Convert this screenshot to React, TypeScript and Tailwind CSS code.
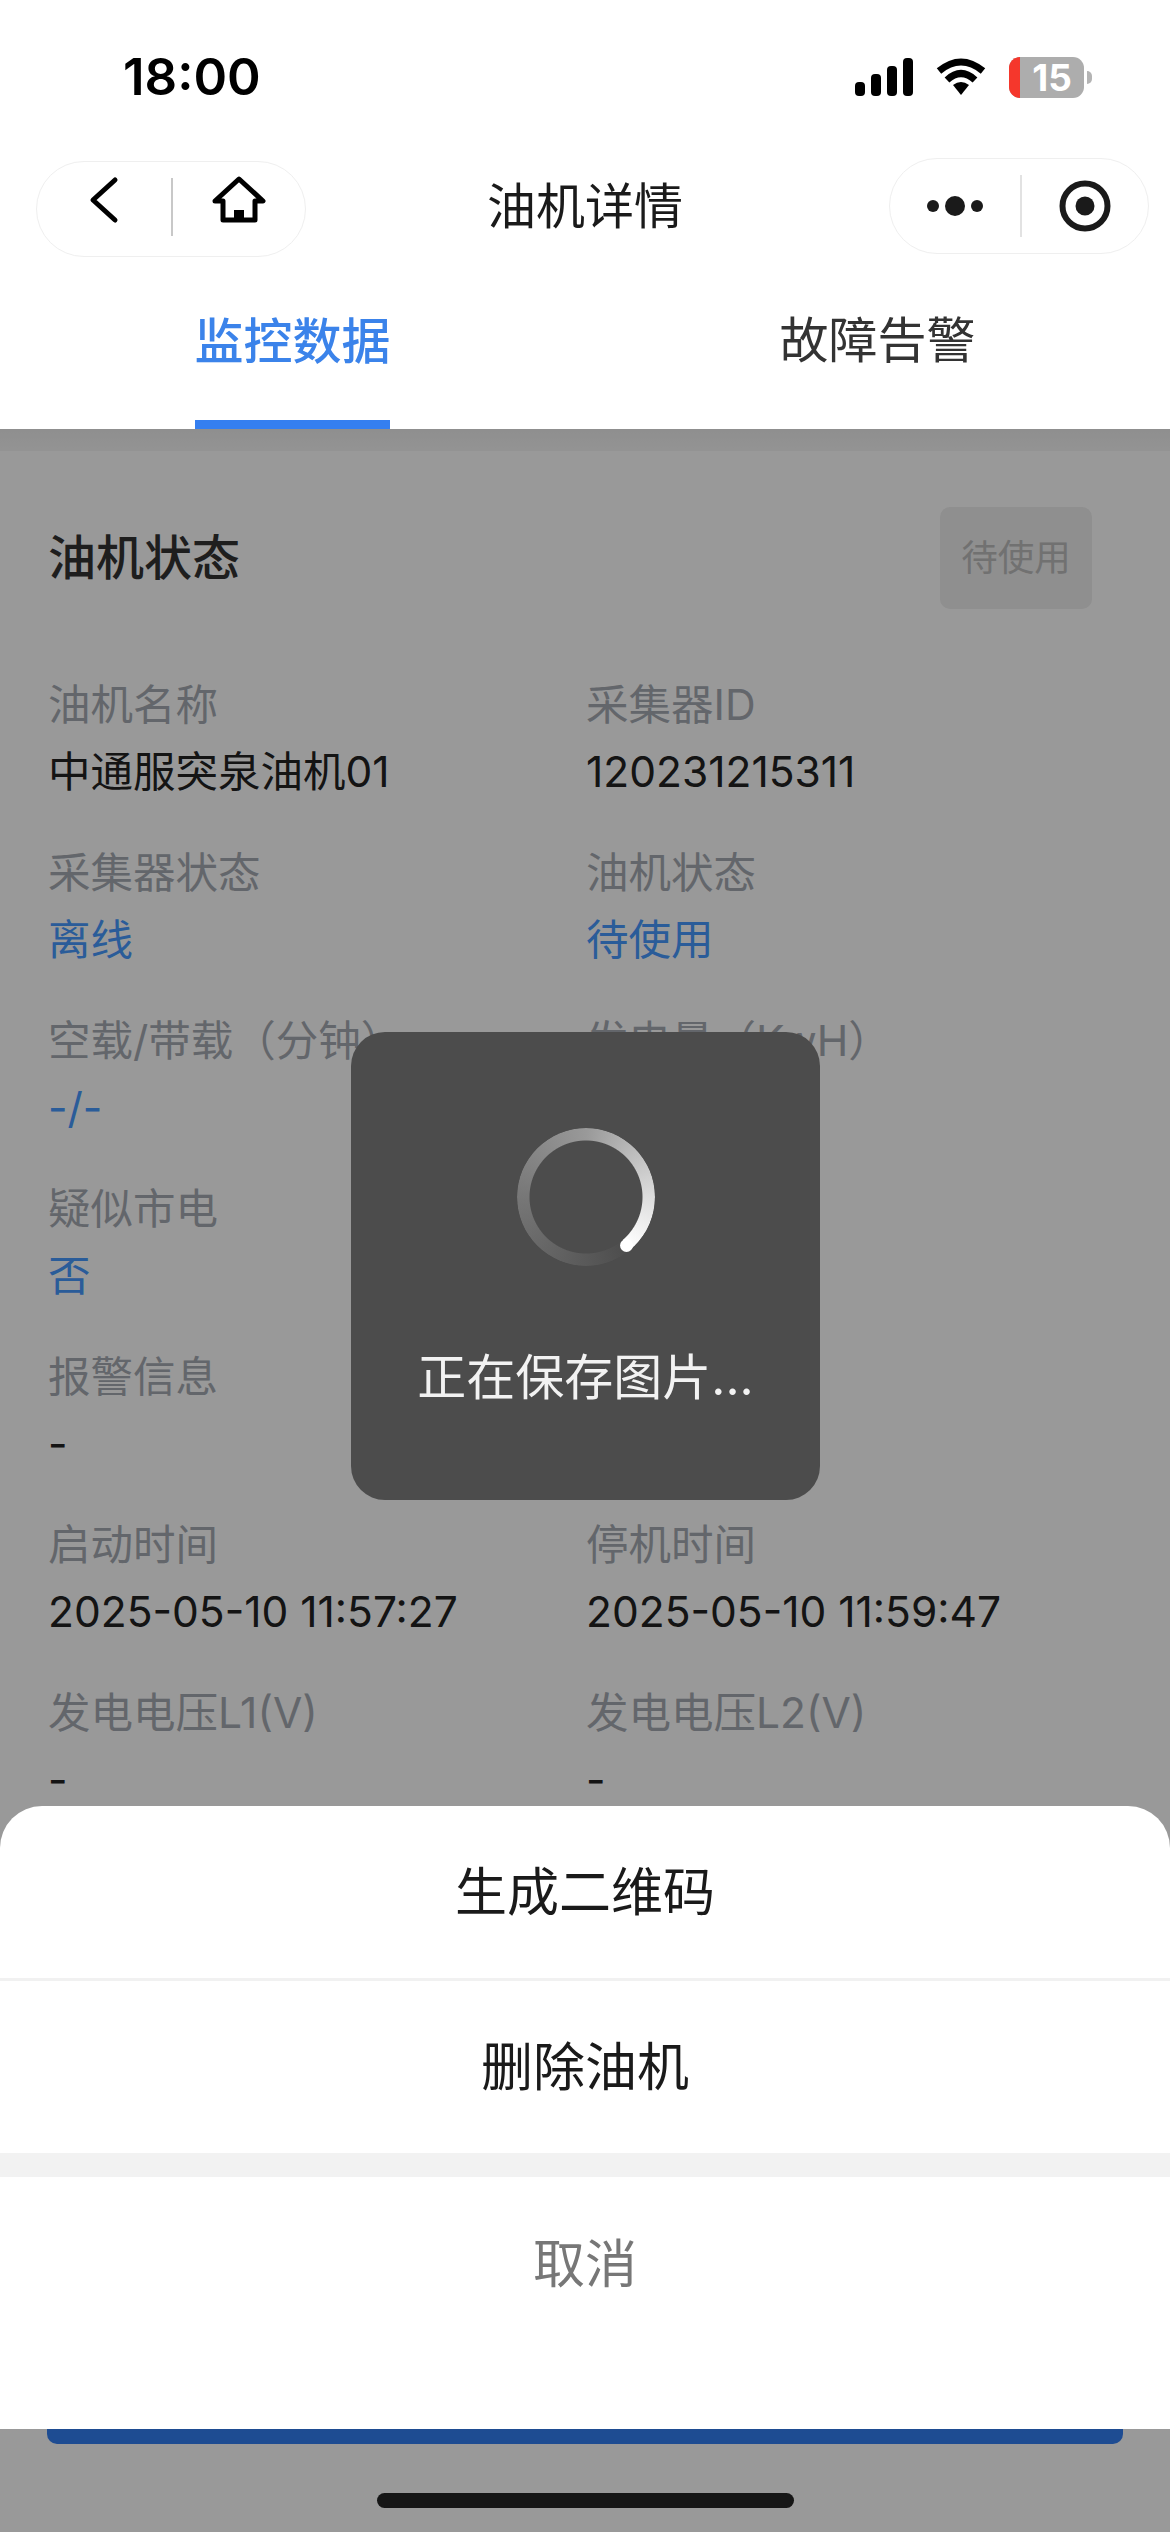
const rows = [
  [
    { label: '油机名称', value: '中通服突泉油机01' },
    { label: '采集器ID', value: '120231215311' },
  ],
  [
    { label: '采集器状态', value: '离线', blue: true },
    { label: '油机状态', value: '待使用', blue: true },
  ],
  [
    { label: '空载/带载（分钟）', value: '-/-', blue: true },
    { label: '发电量（KwH）', value: '-', blue: true },
  ],
  [
    { label: '疑似市电', value: '否', blue: true },
    { label: '', value: '' },
  ],
  [
    { label: '报警信息', value: '-' },
    { label: '', value: '' },
  ],
  [
    { label: '启动时间', value: '2025-05-10 11:57:27' },
    { label: '停机时间', value: '2025-05-10 11:59:47' },
  ],
  [
    { label: '发电电压L1(V)', value: '-' },
    { label: '发电电压L2(V)', value: '-' },
  ],
];

function StatusBar() {
  return (
    <div className="h-[154px] flex items-center justify-between pl-[123px] pr-[78px]">
      <span className="text-[51px] font-semibold text-black">18:00</span>
      <div className="flex items-center">
        <svg width="59" height="38" viewBox="0 0 59 38" fill="#000">
          <rect x="0" y="24" width="10" height="14" rx="4" />
          <rect x="16" y="16" width="10" height="22" rx="4" />
          <rect x="32" y="8" width="10" height="30" rx="4" />
          <rect x="48" y="0" width="10" height="38" rx="4" />
        </svg>
        <svg className="ml-[22px]" width="50" height="38" viewBox="0 0 50 38" fill="none" stroke="#000">
          <path d="M3 13 Q25 -5 47 13" strokeWidth="7" />
          <path d="M11 22 Q25 9 39 22" strokeWidth="7" />
          <path d="M17 27 Q25 21 33 27 L25 37 Z" fill="#000" stroke="none" />
        </svg>
        <div className="ml-[23px] w-[75px] h-[41px] rounded-[11px] bg-[#adadad] flex items-center">
          <div className="w-[11px] h-full rounded-l-[11px] bg-[#f5372c]" />
          <span className="flex-1 text-center text-[37px] leading-none font-bold text-white">15</span>
        </div>
        <div className="ml-[3px] w-[5px] h-[13px] rounded-r-full bg-[#b4b4b4]" />
      </div>
    </div>
  );
}

function NavBar() {
  return (
    <div className="relative h-[104px] flex items-center justify-between pl-[36px] pr-[21px]">
      <div className="mt-[6px] w-[270px] h-[96px] rounded-full border border-[#efefef] flex items-center">
        <div className="w-[134px] flex justify-center pb-[18px]">
          <svg width="30" height="48" viewBox="0 0 30 48" fill="none" stroke="#000" strokeWidth="5" strokeLinecap="round" strokeLinejoin="round">
            <path d="M26 4 L4 24 L26 44" />
          </svg>
        </div>
        <div className="w-[2px] h-[58px] mb-[4px] bg-[#c8c8c8]" />
        <div className="flex-1 flex justify-center pb-[18px]">
          <svg width="54" height="48" viewBox="0 0 54 48" fill="none" stroke="#000" strokeWidth="5" strokeLinejoin="round">
            <path d="M27 3 L51 25 H43 V44 H11 V25 H3 Z" />
            <rect x="22" y="34" width="10" height="10" fill="#000" stroke="none" />
          </svg>
        </div>
      </div>
      <span className="absolute left-0 right-0 top-[28px] text-center text-[49px] leading-none text-[#1a1a1a]">油机详情</span>
      <div className="relative w-[260px] h-[96px] rounded-full border border-[#efefef] flex items-center">
        <div className="w-[130px] flex justify-center">
          <svg width="56" height="22" viewBox="0 0 56 22" fill="#1a1a1a">
            <circle cx="6" cy="11" r="6" />
            <circle cx="28" cy="11" r="10" />
            <circle cx="50" cy="11" r="6" />
          </svg>
        </div>
        <div className="w-[2px] h-[62px] bg-[#e2e2e2]" />
        <div className="flex-1 flex justify-center">
          <svg width="52" height="52" viewBox="0 0 52 52" fill="none">
            <circle cx="26" cy="26" r="22.500" stroke="#1a1a1a" strokeWidth="6" />
            <circle cx="26" cy="26" r="9.500" fill="#1a1a1a" />
          </svg>
        </div>
      </div>
    </div>
  );
}

function Tabs() {
  return (
    <div className="h-[171px] flex bg-white">
      <div className="w-1/2 flex justify-center">
        <div className="w-[195px] h-full flex flex-col items-center justify-end">
          <span className="text-[49px] leading-none text-[#3b83ea] font-medium whitespace-nowrap mb-[54px]">监控数据</span>
          <div className="w-full h-[9px] bg-[#357ff0]" />
        </div>
      </div>
      <div className="w-1/2 flex justify-center">
        <span className="text-[49px] leading-none text-[#333] mt-[58px]">故障告警</span>
      </div>
    </div>
  );
}

function Card() {
  return (
    <div>
      {/* soft band under the tabs */}
      <div className="h-[22px] bg-gradient-to-b from-[#eeeeee] to-[#f6f6f6]" />
      <div className="px-[48px] pt-[56px]">
        <div className="flex items-center justify-between pr-[30px]">
          <span className="text-[48px] font-medium leading-none text-[#333]">油机状态</span>
          <div className="w-[152px] h-[102px] rounded-[10px] bg-[#eeeeee] flex items-center justify-center text-[36.5px] text-[#bcbcbc]">
            待使用
          </div>
        </div>
        <div className="mt-[67px] flex flex-col gap-[36px]">
          {rows.map((row, i) => (
            <div key={i} className="grid grid-cols-[538px_1fr] h-[132px]">
              {row.map((item, j) => (
                <div key={j} className="flex flex-col gap-[9px]">
                  <span className="h-[58px] text-[42.500px] leading-[58px] text-[#a5aab2]">{item.label}</span>
                  <span className={`h-[58px] text-[42.500px] leading-[58px] ${item.blue ? 'text-[#4699ff]' : 'text-[#222222]'}`}>
                    {item.value}
                  </span>
                </div>
              ))}
            </div>
          ))}
        </div>
        <div className="mt-[532px] -mx-[1px] h-[96px] rounded-[10px] bg-[#337ff3]" />
      </div>
    </div>
  );
}

function Toast() {
  return (
    <div className="absolute left-[351px] top-[1032px] w-[469px] h-[468px] rounded-[34px] bg-[#4c4c4c] flex flex-col items-center">
      <div className="relative mt-[96px] w-[138px] h-[138px]">
        <div className="w-full h-full rounded-full bg-[conic-gradient(from_140deg,#4c4c4c_0deg,#777777_130deg,#999999_220deg,#dddddd_310deg,#ffffff_360deg)] [mask:radial-gradient(closest-side,transparent_calc(100%-13px),black_calc(100%-12px))]" />
        <div className="absolute left-[103px] top-[111px] w-[13px] h-[13px] rounded-full bg-white" />
      </div>
      <span className="mt-[80px] text-[49px] leading-[64px] text-[#f2f2f2] whitespace-nowrap">正在保存图片...</span>
    </div>
  );
}

function ActionSheet() {
  return (
    <div className="absolute left-0 right-0 top-[1806px] h-[623px] rounded-t-[42px] overflow-hidden bg-white flex flex-col">
      <div className="h-[172px] pt-[2px] flex items-center justify-center text-[52px] text-[#1a1a1a]">生成二维码</div>
      <div className="h-[3px] bg-[#f1f1f1]" />
      <div className="h-[172px] pt-[2px] flex items-center justify-center text-[52px] text-[#1a1a1a]">删除油机</div>
      <div className="h-[24px] bg-[#f2f2f2]" />
      <div className="h-[252px] pb-[76px] flex items-center justify-center text-[52px] text-[#777777]">取消</div>
    </div>
  );
}

export default function App() {
  return (
    <div className="relative w-[1170px] h-[2532px] overflow-hidden bg-white font-['Inter','Noto_Sans_CJK_SC',sans-serif]">
      <div className="relative z-10 bg-white">
        <StatusBar />
        <NavBar />
        <Tabs />
      </div>
      <Card />
      {/* mask starts under the tabs, top bar stays bright */}
      <div className="absolute left-0 right-0 top-[429px] bottom-0 bg-black/40" />
      <Toast />
      <ActionSheet />
      <div className="absolute left-[377px] top-[2493px] w-[417px] h-[15px] rounded-full bg-[#161616]" />
    </div>
  );
}
